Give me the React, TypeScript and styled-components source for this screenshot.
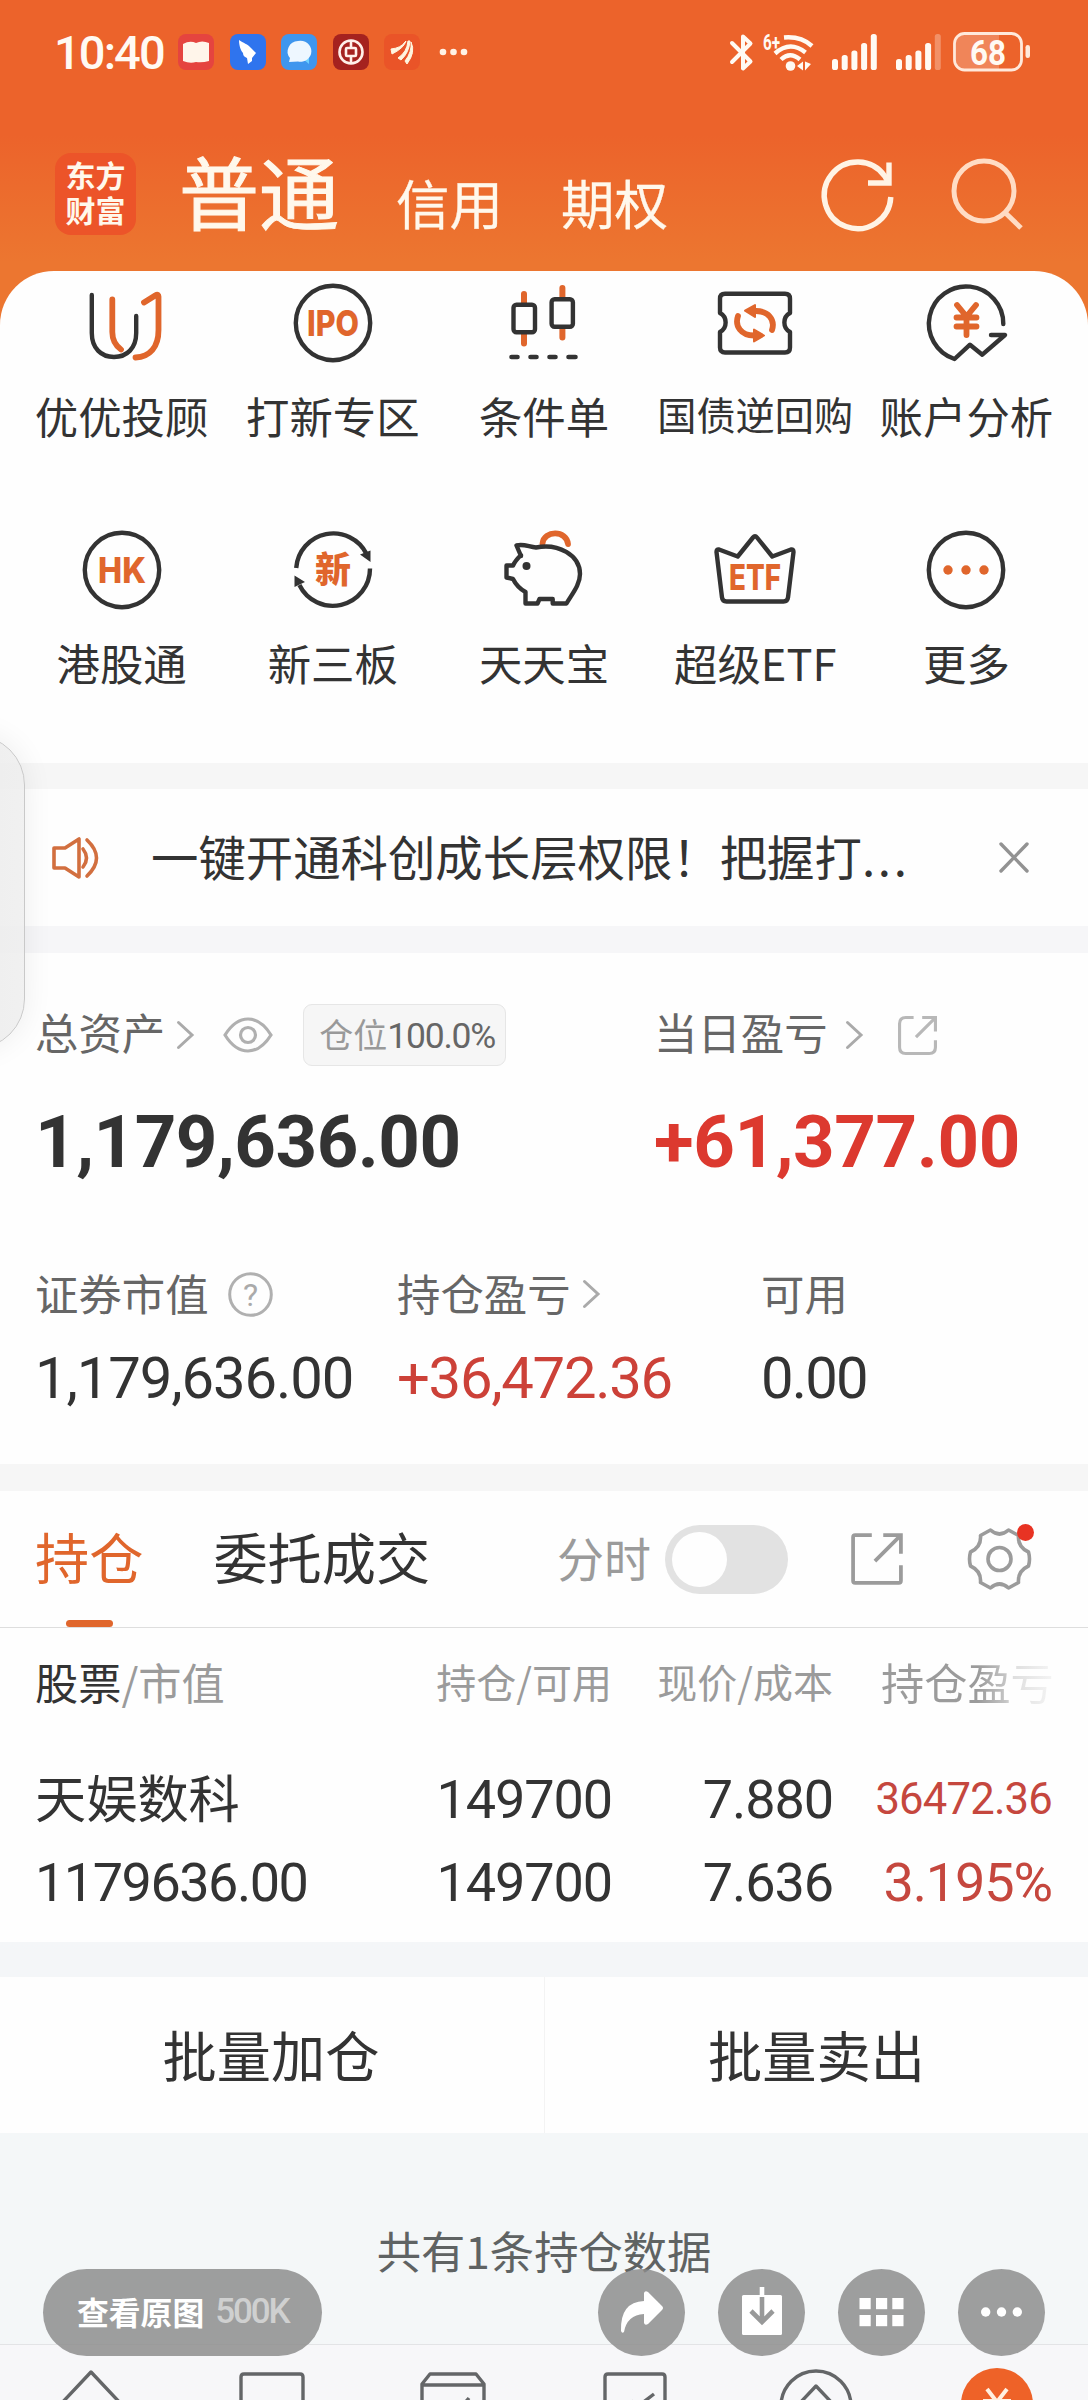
import React from "react";
import styled, { createGlobalStyle } from "styled-components";

const CJK = `"Noto Sans CJK SC", "Noto Sans", sans-serif`;
const NUM = `Roboto, "Noto Sans CJK SC", sans-serif`;
const DARK = "#333333";
const ORANGE = "#e0662c";
const GREY = "#9b9b9b";

const GlobalStyle = createGlobalStyle`
  *, *::before, *::after { box-sizing: border-box; }
  body { margin: 0; font-family: ${CJK}; color: ${DARK}; background: #f4f7f8; }
  svg { display: block; flex: none; overflow: visible; }
`;

const Screen = styled.div`
  position: relative;
  width: 1088px;
  height: 2400px;
  overflow: hidden;
  display: flex;
  flex-direction: column;
  background: #f4f7f8;
`;

/* ---------- header ---------- */

const Hero = styled.header`
  height: 271px;
  flex: none;
  display: flex;
  flex-direction: column;
  background: linear-gradient(#ec632b 0, #ec632b 135px, #ec7630 262px, #ec7630 100%);
`;

const StatusBar = styled.div`
  height: 104px;
  padding: 0 57px 0 54px;
  display: flex;
  align-items: center;
  color: #fffaf3;
`;

const Clock = styled.span`
  width: 124px;
  font: 500 47px/47px ${NUM};
  letter-spacing: -1.9px;
`;

const AppIcons = styled.div`
  display: flex;
  gap: 15.5px;
  margin-right: 19px;
`;

const StatusRight = styled.div`
  margin-left: auto;
  display: flex;
  align-items: center;
`;

const Spacer = styled.span<{ $w: number }>`
  width: ${(p) => p.$w}px;
  flex: none;
`;

const TitleBar = styled.div`
  height: 167px;
  padding: 0 65px 0 55px;
  display: flex;
  align-items: flex-start;
  color: #fff8ec;
`;

const Logo = styled.div`
  width: 81px;
  height: 82px;
  margin-top: 49px;
  padding-top: 4px;
  border-radius: 16px;
  background: #ec5429;
  font: 700 30px/35px ${CJK};
  text-align: center;
`;

const TitleTab = styled.span<{ $main?: boolean; $left: number }>`
  margin-left: ${(p) => p.$left}px;
  padding-top: ${(p) => (p.$main ? 45 : 71)}px;
  font-size: ${(p) => (p.$main ? 80 : 53.5)}px;
  line-height: ${(p) => (p.$main ? 80 : 54)}px;
  -webkit-text-stroke: ${(p) => (p.$main ? 1 : 0.3)}px #fff8ec;
`;

const TitleActions = styled.div`
  margin-left: auto;
  padding-top: 53px;
  display: flex;
  gap: 57px;
`;

/* ---------- shortcut grid ---------- */

const SheetBack = styled.div`
  flex: none;
  height: 492px;
  background: linear-gradient(#ec7630 60px, #fefefe 60px);
`;

const Sheet = styled.section`
  height: 100%;
  padding: 12px 16px 0;
  border-radius: 54px 54px 0 0;
  background: #fefefe;
  display: grid;
  grid-template-columns: repeat(5, 1fr);
  grid-auto-rows: 247px;
`;

const Shortcut = styled.div`
  display: flex;
  flex-direction: column;
  align-items: center;
`;

const ShortcutLabel = styled.span<{ $small?: boolean }>`
  margin-top: ${(p) => (p.$small ? 26 : 28)}px;
  font-size: ${(p) => (p.$small ? 39.2 : 43.4)}px;
  line-height: 48px;
  white-space: nowrap;
`;

/* ---------- shared ---------- */

const Band = styled.div<{ $h: number; $c?: string }>`
  flex: none;
  height: ${(p) => p.$h}px;
  background: ${(p) => p.$c ?? "#f6f6f6"};
`;

const Panel = styled.section<{ $h: number }>`
  flex: none;
  height: ${(p) => p.$h}px;
  background: #fefefe;
`;

/* ---------- notice ---------- */

const Notice = styled(Panel)`
  display: flex;
  align-items: center;
  padding: 0 59px 0 52px;
`;

const NoticeText = styled.span`
  margin: -4px auto 0 51px;
  font-size: 47.4px;
  line-height: 56px;
  white-space: nowrap;
`;

const Dots = styled.span`
  letter-spacing: 2.8px;
`;

/* ---------- assets ---------- */

const Assets = styled(Panel)`
  padding: 50px 36px 0 35px;
`;

const TopRow = styled.div`
  display: grid;
  grid-template-columns: 619px 1fr;
`;

const LabelLine = styled.div`
  height: 64px;
  display: flex;
  align-items: center;
  color: #666;
  font-size: 43.4px;
  line-height: 60px;
`;

const Label = styled.span<{ $lift?: number }>`
  margin-top: -${(p) => p.$lift ?? 5}px;
  white-space: nowrap;
`;

const PositionTag = styled.span`
  height: 62px;
  margin-left: 30px;
  padding: 0 10px 3px 15px;
  border: 1px solid #e6e6e6;
  border-radius: 9px;
  background: #f6f6f6;
  color: #999;
  font-size: 34px;
  line-height: 57px;
  white-space: nowrap;

  b {
    font: 400 35.5px/57px ${NUM};
    letter-spacing: -1.2px;
    color: #666;
  }
`;

const Num = styled.span<{ $size: number; $bold?: boolean; $c?: string; $ls?: number }>`
  font-family: ${NUM};
  font-size: ${(p) => p.$size}px;
  font-weight: ${(p) => (p.$bold ? 700 : 400)};
  line-height: 76px;
  letter-spacing: ${(p) => p.$ls ?? -1.1}px;
  color: ${(p) => p.$c ?? DARK};
  white-space: nowrap;
`;

const BigLine = styled.div`
  height: 76px;
  margin-top: 38px;
`;

const BottomRow = styled.div`
  margin-top: 81px;
  display: grid;
  grid-template-columns: 362px 364px 1fr;
`;

const ValueLine = styled.div`
  height: 76px;
  margin-top: 14px;
`;

/* ---------- tabs ---------- */

const TabBar = styled(Panel)`
  display: flex;
  align-items: center;
  padding: 0 57px 0 35px;
  border-bottom: 1px solid #dedede;
`;

const Tab = styled.span<{ $active?: boolean }>`
  height: 135px;
  margin-right: 70px;
  display: flex;
  flex-direction: column;
  align-items: center;
  justify-content: space-between;
  font-size: 54.2px;
  line-height: 128px;
  color: ${(p) => (p.$active ? ORANGE : DARK)};

  &::after {
    content: "";
    width: 47px;
    height: 7px;
    border-radius: 4px;
    background: ${(p) => (p.$active ? ORANGE : "transparent")};
  }
`;

const SwitchLabel = styled.span`
  margin: -5px 14px 0 auto;
  color: ${GREY};
  font-size: 47px;
  line-height: 60px;
`;

const Switch = styled.span`
  width: 123px;
  height: 69px;
  padding: 7px;
  border-radius: 35px;
  background: #e2e2e2;
  margin-right: 63px;

  &::before {
    content: "";
    display: block;
    width: 55px;
    height: 55px;
    border-radius: 50%;
    background: #fefefe;
  }
`;

const GearBox = styled.span`
  position: relative;
  margin-left: 65px;

  &::after {
    content: "";
    position: absolute;
    right: -3px;
    top: -4px;
    width: 17px;
    height: 17px;
    border-radius: 50%;
    background: #e83323;
  }
`;

/* ---------- holdings ---------- */

const Holdings = styled(Panel)`
  padding: 20px 36px 0 35px;
`;

const Row = styled.div<{ $h: number; $gap?: number }>`
  height: ${(p) => p.$h}px;
  margin-top: ${(p) => p.$gap ?? 0}px;
  display: grid;
  grid-template-columns: 356px 221px 221px 219px;
  align-items: center;
`;

const Cell = styled.span<{ $right?: boolean; $size?: number; $c?: string }>`
  text-align: ${(p) => (p.$right ? "right" : "left")};
  font-size: ${(p) => p.$size ?? 43.2}px;
  color: ${(p) => p.$c ?? DARK};
  line-height: 66px;
  white-space: nowrap;

  i {
    font-style: normal;
    color: ${GREY};
  }
`;

const NameCell = styled(Cell)`
  margin-top: -7px;
`;

const FadeCell = styled(Cell)`
  padding-left: 48px;
  background: linear-gradient(90deg, ${GREY} 145px, #c4c4c4 172px, #dedede 180px, #f4f4f4 219px);
  background-clip: text;
  -webkit-background-clip: text;
  color: transparent;
`;

/* ---------- batch actions ---------- */

const Batch = styled(Panel)`
  display: grid;
  grid-template-columns: 1fr 1fr;
`;

const BatchButton = styled.div`
  display: flex;
  justify-content: center;
  padding: 44px 2px 0 0;
  font-size: 54.2px;
  line-height: 66px;

  & + & {
    border-left: 1px solid #f3f3f3;
    padding-right: 0;
  }
`;

const Summary = styled.div`
  flex: none;
  height: 211px;
  padding-top: 84px;
  text-align: center;
  color: #5f6363;
  font-size: 44.3px;
  line-height: 66px;
`;

/* ---------- bottom ---------- */

const NavBar = styled.nav`
  flex: 1;
  border-top: 1px solid #e3e4e6;
  background: #f7f7f9;
  display: grid;
  grid-template-columns: repeat(6, 1fr);
  justify-items: center;
  padding-top: 22px;
`;

const EdgePanel = styled.aside`
  position: absolute;
  left: -75px;
  top: 735px;
  width: 100px;
  height: 314px;
  border: 1px solid #c9c9c9;
  border-radius: 50px;
  background: linear-gradient(90deg, rgba(233, 233, 233, 0.9), rgba(238, 238, 238, 0.85));
  box-shadow: 0 0 30px rgba(0, 0, 0, 0.07);
`;

const Overlay = styled.div`
  position: absolute;
  left: 43px;
  right: 43px;
  top: 2269px;
  height: 87px;
  display: flex;
  gap: 33px;
`;

const OriginalPill = styled.div`
  width: 279px;
  margin-right: auto;
  padding: 0 0 3px 34px;
  border-radius: 44px;
  background: rgba(140, 140, 140, 0.83);
  color: #fff;
  display: flex;
  align-items: center;
  font: 700 31.8px/80px ${CJK};

  small {
    margin: 2px 0 0 11px;
    font: 500 35px/80px ${NUM};
    letter-spacing: -2.1px;
    color: #cfd0d0;
  }
`;

const RoundButton = styled.div`
  width: 87px;
  height: 87px;
  border-radius: 50%;
  background: rgba(140, 140, 140, 0.83);
`;

/* ---------- drawings ---------- */

const line = { fill: "none", stroke: DARK, strokeWidth: 4.4, strokeLinecap: "round", strokeLinejoin: "round" } as const;
const hot = { ...line, stroke: ORANGE, strokeWidth: 5.8 } as const;
const ring = <circle cx="40" cy="40" r="37.2" {...line} />;

const IconText = ({ children, size, y, w }: { children: string; size: number; y: number; w: number }) => (
  <text x="40" y={y} textAnchor="middle" textLength={w} lengthAdjust="spacingAndGlyphs"
    fontFamily="Inter, sans-serif" fontWeight="800" fontSize={size} fill={ORANGE}>{children}</text>
);

const SHORTCUTS: { label: string; small?: boolean; icon: React.ReactNode }[] = [
  {
    label: "优优投顾",
    icon: (
      <>
        <path {...line} d="M9.8 12V50C9.8 65 19 74 32 74S54.2 65 54.2 50V33" />
        <path {...hot} d="M30.3 16.5V49C30.3 57 33.5 62.5 39 66.5" />
        <path {...hot} d="M62 19.5L74 12C75.5 11 76.5 12 76.5 13.5V47C76.5 64 68 74 53.5 74.5" />
      </>
    ),
  },
  { label: "打新专区", icon: <>{ring}<IconText size={35.5} y={53} w={52}>IPO</IconText></> },
  {
    label: "条件单",
    icon: (
      <>
        <path {...hot} strokeWidth={6} d="M20 11V21M20 51V60.5M58.4 5V15M58.4 45V54.5" />
        <rect {...line} x="9.5" y="21.7" width="21.5" height="27.5" rx="3" />
        <rect {...line} x="47.6" y="16.3" width="21.3" height="27.5" rx="3" />
        <path {...line} strokeWidth={4.6} d="M7.5 74H13.5M26.5 74H32.5M45.5 74H51.5M64.5 74H71.5" />
      </>
    ),
  },
  {
    label: "国债逆回购",
    small: true,
    icon: (
      <>
        <path {...line} d="M10 10.7H70Q75 10.7 75 15.7V30C67.5 34 67.5 45 75 49V64.5Q75 69.5 70 69.5H10Q5 69.5 5 64.5V49C12.5 45 12.5 34 5 30V15.7Q5 10.7 10 10.7Z" />
        <path {...hot} d="M23 33C19.5 43 26 52.5 39 52.5M57 47C60.5 36.5 53 28 41 28" />
        <path fill={ORANGE} stroke={ORANGE} strokeWidth="2" strokeLinejoin="round" d="M30 27.7L40 22V34ZM49 52.5L39 46.5V58.5Z" />
      </>
    ),
  },
  {
    label: "账户分析",
    icon: (
      <>
        <path {...line} d="M77.300 41A37.200 37.200 0 1 0 28.500 76L44 61.700L56.300 71.700L79 52H65" />
        <path {...hot} d="M31 22L40.500 33.500L50 22M40.500 33.500V52M30.500 34.500H50.500M30.500 43.500H50.500" />
      </>
    ),
  },
  { label: "港股通", icon: <>{ring}<IconText size={35.5} y={53} w={48}>HK</IconText></> },
  {
    label: "新三板",
    icon: (
      <>
        <path {...line} strokeLinecap="butt" d="M3.200 38A37.200 37.200 0 0 1 73.600 24M77 38.500A37.200 37.200 0 0 1 6.400 55" />
        <path fill={DARK} d="M77.500 20.500V32L67 24.500ZM1.500 57V45.500L12 52Z" />
        <text x="40" y="53" textAnchor="middle" fontFamily={CJK} fontWeight="800" fontSize="36" fill={ORANGE}>新</text>
      </>
    ),
  },
  {
    label: "天天宝",
    icon: (
      <>
        <path {...hot} d="M38.500 13.500C40 0 62.500 0 64 14" />
        <path {...line} strokeLinecap="butt" d="M17 26L12.500 15.500C20 13.500 25 17 32 17.500C54 13 76 25 76 44C76 55 68 64 62.500 73.500H48.700V69H35.500L33.500 73.500H21.500V62C16 59 12 55 9 49L2.500 47.500V35.500H9C11 31 14 28 17 25Z" />
        <circle cx="22.500" cy="36" r="4" fill={DARK} />
      </>
    ),
  },
  {
    label: "超级ETF",
    icon: (
      <>
        <path {...line} d="M4 19.500L22.700 26.500L38 7.500Q40 5 42 7.500L57.300 26.500L76 19.500Q78.500 19 78.500 22L73 67.500Q72.500 71.500 68.500 71.500H11.500Q7.500 71.500 7 67.500L1.500 22Q1.500 19 4 19.500Z" />
        <IconText size={35.5} y={60} w={52}>ETF</IconText>
      </>
    ),
  },
  {
    label: "更多",
    icon: <>{ring}{[22, 40, 58].map((x) => <circle key={x} cx={x} cy="40" r="4.700" fill={ORANGE} />)}</>,
  },
];

const Chevron = () => (
  <svg width="17" height="28" viewBox="0 0 17 28">
    <path d="M1.500 1.500L15 14L1.500 26.500" fill="none" stroke="#aaa" strokeWidth="3" strokeLinecap="round" />
  </svg>
);

const ExportIcon = ({ size, color, r, w }: { size: number; color: string; r: number; w: number }) => (
  <svg width={size} height={size} viewBox="0 0 50 50" fill="none" stroke={color} strokeWidth={w}>
    <path d={`M20 2H${2 + r}Q2 2 2 ${2 + r}V${48 - r}Q2 48 ${2 + r} 48H${48 - r}Q48 48 48 ${48 - r}V31M31 2H48V20M48 2L23 27`} />
  </svg>
);

const Signal = ({ weak }: { weak?: boolean }) => (
  <svg width="45" height="36" viewBox="0 0 45 36" fill="#fffaf3">
    {[11, 15, 19.5, 27, 36].map((h, i) => (
      <rect key={i} x={i * 9.7} y={36 - h} width="6" height={h} rx="2.600" opacity={weak && i === 4 ? 0.3 : 1} />
    ))}
  </svg>
);

const STATUS_APPS: { bg: string; art: React.ReactNode }[] = [
  { bg: "#e5443f", art: <path d="M5 10Q12 6 18 9Q24 6 31 9V27Q24 29 18 28Q12 30 5 27Z" fill="#fff5ea" /> },
  { bg: "#2f74ee", art: <path d="M9 6C13 9 18 10 21 14L26 19L22 24V27L18 30L17 24C14 23 13 21 13 19C11 17 9 12 9 6Z" fill="#fff" /> },
  { bg: "#3f96ee", art: <><path d="M22 25L28 17V30Z" fill="#6cd0ff" /><path d="M17 7a11 10.500 0 1 1 0 20.500L8 28L9 24A11 10.500 0 0 1 17 7Z" fill="#eef7ff" /></> },
  { bg: "#a5221f", art: <g fill="none" stroke="#fff0ea" strokeWidth="2.600"><circle cx="18" cy="18" r="11.500" /><rect x="13" y="14" width="10" height="8" rx="1" /><path d="M18 7V14M18 22V29" /></g> },
  { bg: "#ea5428", art: <path d="M7 15Q17 14 21 8L22 7Q20 14 8 20ZM14 24Q23 18 24 7L26 7Q25 19 17 26ZM21 27Q28 18 27 8Q32 18 23 30Z" fill="#fff5e0" stroke="#fff5e0" /> },
];

const NAV_ICONS: React.ReactNode[] = [
  <path d="M8 39L40 5L72 39" />,
  <path d="M9 40V10Q9 7 12 7H68Q71 7 71 10V40" />,
  <path d="M9 40V17L17 7H63L71 17V40M9 18H71M50 38L56 31" />,
  <path d="M10 40V10Q10 7 13 7H67Q70 7 70 10V40M36 34L42 40L59 27" />,
  <><circle cx="40" cy="39" r="35" /><path d="M22 38L40 19L58 38" /></>,
  <><circle cx="40" cy="37" r="36" fill="#ee6228" stroke="none" /><path d="M30 22L40 35L50 22M26 34H54" stroke="#fff0e0" strokeWidth="4" /></>,
];

/* ---------- page ---------- */

export default function App() {
  return (
    <Screen>
      <GlobalStyle />
      <Hero>
        <StatusBar>
          <Clock>10:40</Clock>
          <AppIcons>
            {STATUS_APPS.map((a, i) => (
              <svg key={i} width="36" height="36" viewBox="0 0 36 36">
                <rect width="36" height="36" rx="8" fill={a.bg} />
                {a.art}
              </svg>
            ))}
          </AppIcons>
          <svg width="28" height="8" viewBox="0 0 28 8" fill="#fff3e6">
            <circle cx="4" cy="4" r="3.300" /><circle cx="14.500" cy="4" r="3.300" /><circle cx="25" cy="4" r="3.300" />
          </svg>
          <StatusRight>
            <svg width="23" height="37" viewBox="0 0 23 37" fill="none" stroke="#fffaf3" strokeWidth="4" strokeLinejoin="round" strokeLinecap="round">
              <path d="M2 9L20.500 27.500L13 34.500V2.500L20.500 9.500L2 28" />
            </svg>
            <Spacer $w={10} />
            <svg width="51" height="38" viewBox="0 0 51 38" fill="none" stroke="#fffaf3" strokeWidth="4.400">
              <text x="0" y="17" fontFamily={NUM} fontWeight="700" fontSize="22" fill="#fffaf3" stroke="none" textLength="17" lengthAdjust="spacingAndGlyphs">6+</text>
              <path d="M21 4.500Q38 3 49 13M12 20.500Q27 7 42.500 19.500M18 26.500Q27 18 37 26.500" />
              <circle cx="27.500" cy="33" r="4.800" fill="#fffaf3" stroke="none" />
              <path d="M34 33L40 28.500V37.500ZM48 31L42 28.500V37.500Z" fill="#fffaf3" stroke="none" />
            </svg>
            <Spacer $w={18} />
            <Signal />
            <Spacer $w={19} />
            <Signal weak />
            <Spacer $w={12} />
            <svg width="78" height="40" viewBox="0 0 78 40">
              <path d="M12 3H46V37H12Q3 37 3 28V12Q3 3 12 3Z" fill="#fff" opacity="0.22" />
              <rect x="1.500" y="1.500" width="67" height="36.500" rx="10" fill="none" stroke="#ffe9db" strokeWidth="2.800" />
              <rect x="72.500" y="13" width="4.500" height="13" rx="2.200" fill="#ffe9db" />
              <text x="35" y="32.500" textAnchor="middle" textLength="36" lengthAdjust="spacingAndGlyphs" fontFamily={NUM} fontWeight="700" fontSize="35" fill="#fffaf3">68</text>
            </svg>
          </StatusRight>
        </StatusBar>
        <TitleBar>
          <Logo>东方<br />财富</Logo>
          <TitleTab $main $left={43}>普通</TitleTab>
          <TitleTab $left={57}>信用</TitleTab>
          <TitleTab $left={58}>期权</TitleTab>
          <TitleActions>
            <svg width="72" height="74" viewBox="0 0 72 74" fill="none" stroke="#fff3e4" strokeWidth="5.400">
              <path d="M68.800 40A33.300 33.300 0 1 1 63 19.500L66 25" />
              <path d="M67 5.500V26H46" />
            </svg>
            <svg width="72" height="74" viewBox="0 0 72 74" fill="none" stroke="#ffdcc4" strokeWidth="5">
              <circle cx="33" cy="34" r="30" /><path d="M54 55.500L70 71" />
            </svg>
          </TitleActions>
        </TitleBar>
      </Hero>

      <SheetBack>
        <Sheet>
          {SHORTCUTS.map((s) => (
            <Shortcut key={s.label}>
              <svg width="80" height="80" viewBox="0 0 80 80">{s.icon}</svg>
              <ShortcutLabel $small={s.small}>{s.label}</ShortcutLabel>
            </Shortcut>
          ))}
        </Sheet>
      </SheetBack>

      <Band $h={26} />
      <Notice $h={137}>
        <svg width="48" height="42" viewBox="0 0 48 42" fill="none" stroke="#d26f3f" strokeWidth="3.600" strokeLinejoin="round" strokeLinecap="round">
          <path d="M2 11H13L27 2V40L13 31H2ZM31 12Q38 21 31 30M35 3Q54 21 35 39" />
        </svg>
        <NoticeText>一键开通科创成长层权限！把握打<Dots>...</Dots></NoticeText>
        <svg width="30" height="31" viewBox="0 0 30 31" fill="none" stroke="#929292" strokeWidth="3.400" strokeLinecap="round">
          <path d="M2 2L28 29M28 2L2 29" />
        </svg>
      </Notice>
      <Band $h={27} $c="#f6f6f8" />

      <Assets $h={511}>
        <TopRow>
          <div>
            <LabelLine>
              <Label $lift={9}>总资产</Label>
              <Spacer $w={12} />
              <Chevron />
              <Spacer $w={29} />
              <svg width="50" height="36" viewBox="0 0 50 36" fill="none" stroke="#b0b0b0" strokeWidth="3.200">
                <path d="M2 18Q12 2 25 2T48 18Q38 34 25 34T2 18Z" /><circle cx="25" cy="18" r="7.500" />
              </svg>
              <PositionTag>仓位<b>100.0%</b></PositionTag>
            </LabelLine>
            <BigLine><Num $size={72.6} $bold $ls={-0.5}>1,179,636.00</Num></BigLine>
          </div>
          <div>
            <LabelLine>
              <Label $lift={9}>当日盈亏</Label>
              <Spacer $w={18} />
              <Chevron />
              <Spacer $w={35} />
              <ExportIcon size={39} color="#b8b8b8" r={8} w={4} />
            </LabelLine>
            <BigLine><Num $size={72.6} $bold $ls={-0.4} $c="#dc392f">+61,377.00</Num></BigLine>
          </div>
        </TopRow>
        <BottomRow>
          <div>
            <LabelLine>
              <Label>证券市值</Label>
              <Spacer $w={19} />
              <svg width="45" height="45" viewBox="0 0 45 45">
                <circle cx="22.500" cy="22.500" r="20.800" fill="none" stroke="#b0b0b0" strokeWidth="3" />
                <text x="22.500" y="34" textAnchor="middle" fontFamily={NUM} fontSize="32" fill="#aaa">?</text>
              </svg>
            </LabelLine>
            <ValueLine><Num $size={58} $ls={-1.1}>1,179,636.00</Num></ValueLine>
          </div>
          <div>
            <LabelLine><Label>持仓盈亏</Label><Spacer $w={12} /><Chevron /></LabelLine>
            <ValueLine><Num $size={58} $ls={-1.3} $c="#cc4138">+36,472.36</Num></ValueLine>
          </div>
          <div>
            <LabelLine><Label>可用</Label></LabelLine>
            <ValueLine><Num $size={58} $ls={-1.8}>0.00</Num></ValueLine>
          </div>
        </BottomRow>
      </Assets>

      <Band $h={27} />
      <TabBar $h={137}>
        <Tab $active>持仓</Tab>
        <Tab>委托成交</Tab>
        <SwitchLabel>分时</SwitchLabel>
        <Switch />
        <ExportIcon size={52} color={GREY} r={2} w={3.6} />
        <GearBox>
          <svg width="63" height="62" viewBox="-31.500 -31 63 62" fill="none" stroke={GREY} strokeWidth="3.600" strokeLinejoin="round">
            <circle r="11.500" />
            <path d="M-9 -29Q0 -21 9 -29L19 -23.500Q18 -12 29 -7Q31 0 29 7Q18 12 19 23.500L9 29Q0 21 -9 29L-19 23.500Q-18 12 -29 7Q-31 0 -29 -7Q-18 -12 -19 -23.500Z" />
          </svg>
        </GearBox>
      </TabBar>

      <Holdings $h={314}>
        <Row $h={66}>
          <Cell>股票<i>/市值</i></Cell>
          <Cell $right $size={40} $c={GREY}>持仓/可用</Cell>
          <Cell $right $size={40} $c={GREY}>现价/成本</Cell>
          <FadeCell>持仓盈亏</FadeCell>
        </Row>
        <Row $h={83} $gap={44}>
          <NameCell $size={51.2}>天娱数科</NameCell>
          <Cell $right><Num $size={54}>149700</Num></Cell>
          <Cell $right><Num $size={54}>7.880</Num></Cell>
          <Cell $right><Num $size={43.6} $ls={-0.8} $c="#c5473e">36472.36</Num></Cell>
        </Row>
        <Row $h={83}>
          <Cell><Num $size={54} $ls={-1.5}>1179636.00</Num></Cell>
          <Cell $right><Num $size={54}>149700</Num></Cell>
          <Cell $right><Num $size={54}>7.636</Num></Cell>
          <Cell $right><Num $size={54} $c="#c5473e">3.195%</Num></Cell>
        </Row>
      </Holdings>

      <Band $h={35} $c="#f4f6f8" />
      <Batch $h={156}>
        <BatchButton>批量加仓</BatchButton>
        <BatchButton>批量卖出</BatchButton>
      </Batch>
      <Summary>共有1条持仓数据</Summary>

      <NavBar>
        {NAV_ICONS.map((icon, i) => (
          <svg key={i} width="80" height="80" viewBox="0 0 80 80" fill="none" stroke="#646668" strokeWidth="3.400" strokeLinejoin="round">
            {icon}
          </svg>
        ))}
      </NavBar>

      <EdgePanel />
      <Overlay>
        <OriginalPill>查看原图<small>500K</small></OriginalPill>
        <RoundButton>
          <svg width="87" height="87" viewBox="0 0 87 87" fill="#fff">
            <path d="M46 24Q47 21 50 23L64 37Q66 39 64 41L50 55Q47 57 46 54V45Q29 46 26 63Q24 65 23 62Q22 33 46 32Z" />
          </svg>
        </RoundButton>
        <RoundButton>
          <svg width="87" height="87" viewBox="0 0 87 87" fill="none">
            <rect x="24" y="26" width="40" height="40" rx="1.500" fill="#fff" />
            <path d="M44 28V53M33 42L44 53L55 42" stroke="#989999" strokeWidth="4.600" />
            <path d="M44 18V27" stroke="#fff" strokeWidth="4.600" />
          </svg>
        </RoundButton>
        <RoundButton>
          <svg width="87" height="87" viewBox="0 0 87 87" fill="#fff">
            {[21.5, 38, 54.3].map((x) => [29, 46].map((y) => <rect key={`${x}-${y}`} x={x} y={y} width="11.200" height="11.200" />))}
          </svg>
        </RoundButton>
        <RoundButton>
          <svg width="87" height="87" viewBox="0 0 87 87" fill="#fff">
            {[27.7, 43.5, 59.3].map((x) => <circle key={x} cx={x} cy="43" r="4.700" />)}
          </svg>
        </RoundButton>
      </Overlay>
    </Screen>
  );
}
